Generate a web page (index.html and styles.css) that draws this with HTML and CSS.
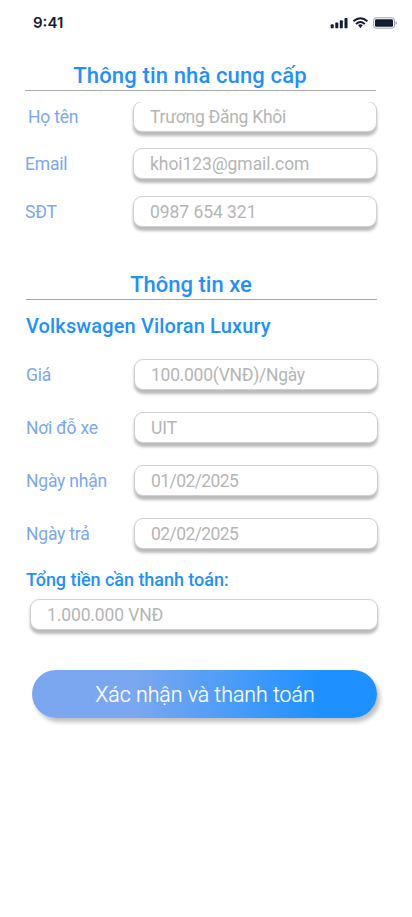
FILE: index.html
```html
<!DOCTYPE html>
<html lang="vi">
<head>
<meta charset="utf-8">
<meta name="viewport" content="width=device-width, initial-scale=1">
<title>Xác nhận và thanh toán</title>
<link rel="stylesheet" href="styles.css">
</head>
<body>
<header class="status">
  <span class="time">9:41</span>
  <svg class="status-icons" width="68" height="14" viewBox="0 0 68 14" aria-hidden="true">
    <g fill="#141b34">
      <rect x="0.7" y="8.3" width="3" height="4" rx="0.9"/>
      <rect x="5.3" y="6.6" width="3" height="5.7" rx="0.9"/>
      <rect x="9.8" y="4.3" width="3" height="8" rx="0.9"/>
      <rect x="14.5" y="2" width="3" height="10.3" rx="0.9"/>
      <path d="M28 9 Q30.4 7.7 32.8 9 L30.4 12.3 Z"/>
      <rect x="45" y="3.3" width="18" height="7.4" rx="1.3"/>
    </g>
    <g fill="none" stroke="#141b34" stroke-width="1.9">
      <path d="M23.4 5.3 Q30.4 -0.9 37.4 5.3"/>
      <path d="M26 8 Q30.4 4.1 34.8 8"/>
    </g>
    <rect x="43.5" y="1.8" width="21" height="10.4" rx="2.7" fill="none" stroke="#141b34" stroke-opacity=".4"/>
    <path d="M65.6 5.2 Q67 5.8 67 7 T65.6 8.8 Z" fill="#141b34" fill-opacity=".45"/>
  </svg>
</header>
<main>
  <section class="supplier">
    <h2 class="title"><span>Thông tin nhà cung cấp</span></h2>
    <div class="row row-name"><label>Họ tên</label><div class="field field-cut tight">Trương Đăng Khôi</div></div>
    <div class="row"><label>Email</label><div class="field">khoi123@gmail.com</div></div>
    <div class="row"><label>SĐT</label><div class="field">0987 654 321</div></div>
  </section>
  <section class="car">
    <h2 class="title"><span>Thông tin xe</span></h2>
    <h3 class="model"><span>Volkswagen Viloran Luxury</span></h3>
    <div class="row"><label>Giá</label><div class="field tight">100.000(VNĐ)/Ngày</div></div>
    <div class="row"><label>Nơi đỗ xe</label><div class="field">UIT</div></div>
    <div class="row"><label>Ngày nhận</label><div class="field date">01/02/2025</div></div>
    <div class="row"><label>Ngày trả</label><div class="field date">02/02/2025</div></div>
    <h4 class="total"><span>Tổng tiền cần thanh toán:</span></h4>
    <div class="field field-total">1.000.000 VNĐ</div>
  </section>
  <button class="pay" type="button">Xác nhận và thanh toán</button>
</main>
</body>
</html>
```
FILE: styles.css
```css
* {
  box-sizing: border-box;
}

body {
  margin: 0;
  height: 917px;
  background: #fff;
  font-family: Roboto, "Liberation Sans", sans-serif;
  font-size: 17.5px;
  font-weight: 400;
  overflow: hidden;
}

.status {
  display: flex;
  justify-content: space-between;
  align-items: center;
  height: 46px;
  padding: 0 14px 0 33px;
}

.time {
  font-family: Inter, sans-serif;
  font-size: 15px;
  font-weight: 600;
  color: #141b34;
  position: relative;
  top: -1px;
}

.title,
.model,
.total {
  margin: 0;
  color: #1e90ff;
  font-weight: 500;
  white-space: nowrap;
}

.title {
  height: 32px;
  border-bottom: 1px solid #a9a9a9;
  font-size: 22px;
  line-height: 33px;
  text-align: center;
}

.supplier {
  width: 352px;
  margin: 13px 0 0 25px;
}

.supplier .title {
  width: 351px;
  padding-right: 21px;
  letter-spacing: 0.14px;
}

.row {
  display: flex;
  align-items: center;
  justify-content: space-between;
  height: 31px;
}

.row label {
  padding-top: 1px;
  color: #7ba7f0;
  letter-spacing: -0.2px;
  white-space: nowrap;
}

.field {
  display: flex;
  align-items: center;
  width: 244px;
  height: 31px;
  padding: 1px 0 0 16px;
  border: 1px solid #d0d0d0;
  border-radius: 9px;
  background: #fff;
  box-shadow: 0 3.5px 3px rgba(0, 0, 0, 0.27);
  color: #b5b5b5;
  letter-spacing: -0.05px;
  white-space: nowrap;
}

.tight {
  letter-spacing: -0.27px;
}

.date {
  letter-spacing: -0.58px;
}

.supplier .row {
  margin-top: 17px;
}

.supplier .row-name {
  margin-top: 10px;
  margin-bottom: -1px;
}

.row-name label {
  padding-left: 3px;
}

.field-cut {
  clip-path: inset(1px -10px -10px -10px);
}

.car {
  width: 352px;
  margin: 41px 0 0 26px;
}

.car .title {
  width: 351px;
  padding-right: 21px;
}

.model {
  height: 59px;
  font-size: 20px;
  line-height: 53px;
  letter-spacing: 0.14px;
}

.car .row + .row {
  margin-top: 22px;
}

.total {
  height: 50px;
  font-size: 18px;
  line-height: 62px;
  letter-spacing: -0.04px;
}

.field-total {
  width: 348px;
  margin-left: 4px;
  letter-spacing: -0.12px;
}

.pay {
  display: block;
  width: 345px;
  height: 48px;
  margin: 40px 0 0 32px;
  padding: 0 0 0 1px;
  border: 0;
  border-radius: 24px;
  background: linear-gradient(90deg, #7ba7f0 30%, #1e90ff 84%);
  box-shadow: 3px 4px 4px rgba(0, 0, 0, 0.25);
  color: #fff;
  font: 300 21.3px Roboto, sans-serif;
  -webkit-text-stroke: 0.2px #fff;
}
```
